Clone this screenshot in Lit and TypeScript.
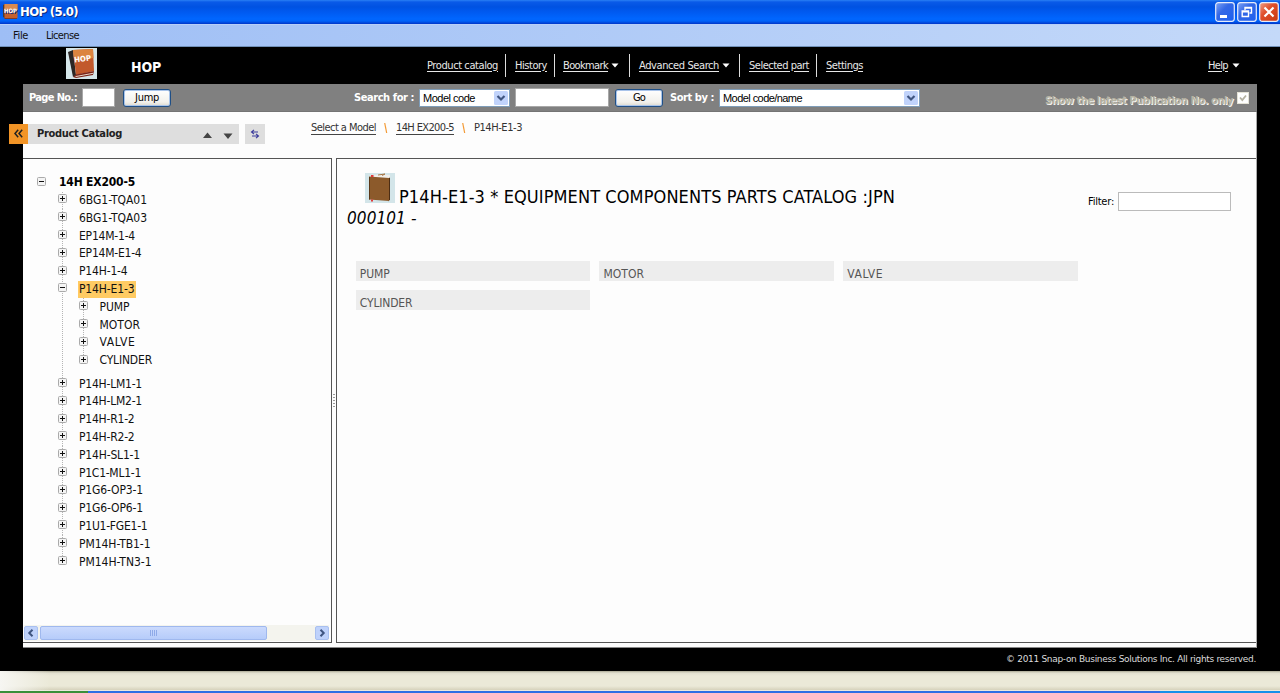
import { LitElement, html, css, svg } from "lit";
import { customElement, property } from "lit/decorators.js";

/** A single line of text whose tracking is adjusted to fill a given width. */
@customElement("fit-text")
class FitText extends LitElement {
  @property({ type: Number }) w = 0;

  static styles = css`
    :host { display: inline-block; white-space: pre; flex: none; }
    .run { display: inline-block; text-decoration: inherit; }
  `;

  firstUpdated() {
    const run = this.renderRoot.querySelector(".run") as HTMLElement;
    const n = (this.textContent || "").length;
    const natural = run.getBoundingClientRect().width;
    if (this.w && n) {
      this.style.letterSpacing = `${(this.w - natural) / n}px`;
      this.style.width = `${this.w}px`;
    }
  }

  render() {
    return html`<span class="run"><slot></slot></span>`;
  }
}

type Node = { label: string; w: number; open?: boolean; selected?: boolean; children?: Node[] };

const NODES: Node[] = [
  { label: "6BG1-TQA01", w: 68 },
  { label: "6BG1-TQA03", w: 68 },
  { label: "EP14M-1-4", w: 56 },
  { label: "EP14M-E1-4", w: 62.5 },
  { label: "P14H-1-4", w: 48.5 },
  {
    label: "P14H-E1-3", w: 55.5, open: true, selected: true,
    children: [
      { label: "PUMP", w: 30 },
      { label: "MOTOR", w: 40.5 },
      { label: "VALVE", w: 36 },
      { label: "CYLINDER", w: 52.5 },
    ],
  },
  { label: "P14H-LM1-1", w: 63 },
  { label: "P14H-LM2-1", w: 63 },
  { label: "P14H-R1-2", w: 55.5 },
  { label: "P14H-R2-2", w: 55.5 },
  { label: "P14H-SL1-1", w: 61 },
  { label: "P1C1-ML1-1", w: 62 },
  { label: "P1G6-OP3-1", w: 64 },
  { label: "P1G6-OP6-1", w: 64 },
  { label: "P1U1-FGE1-1", w: 68.5 },
  { label: "PM14H-TB1-1", w: 71.5 },
  { label: "PM14H-TN3-1", w: 72.5 },
];

const PARTS = [
  { label: "PUMP", w: 30 },
  { label: "MOTOR", w: 40.5 },
  { label: "VALVE", w: 36 },
  { label: "CYLINDER", w: 52.5 },
];

@customElement("app-root")
class AppRoot extends LitElement {
  static styles = css`
    :host {
      display: flex; flex-direction: column; width: 1280px; height: 693px; overflow: hidden;
      background: #000; color: #1a1a1a;
      font: 11px/14px "DejaVu Sans Condensed", "DejaVu Sans", sans-serif;
      font-stretch: condensed;
    }
    * { box-sizing: border-box; }
    svg { display: block; flex: none; }
    ul { list-style: none; margin: 0; padding: 0; }

    .titlebar {
      display: flex; align-items: center; height: 24px; padding: 0 1px 1px 3px; flex: none;
      background: linear-gradient(#2a80f5 0, #0a5ae8 2px, #0052e2 7px, #0058ee 11px, #0066ff 19px, #0062f8 21px, #0035c8 24px);
      color: #fff; font-size: 13px; font-weight: bold; text-shadow: 1px 1px 0 #0a2a7c;
    }
    .titlebar .name { margin: 1px auto 0 2px; }
    .win { display: flex; gap: 2px; }
    .menubar {
      display: flex; align-items: center; height: 23px; padding-left: 13px; gap: 18px; flex: none;
      background: linear-gradient(90deg, #9ebef5, #c4d9f9); border-top: 1px solid #b8cff8;
      border-bottom: 1px solid #7090b8; color: #111;
    }

    .header { display: flex; align-items: center; height: 37px; flex: none; color: #e8e8e8; }
    .header .logo { margin-left: 66px; margin-top: -4px; }
    .header .brand { margin: 3px 0 0 34px; color: #fff; font-size: 14px; font-weight: bold; }
    .nav { display: flex; align-items: center; margin-left: 266px; }
    .nav .item { display: flex; align-items: center; gap: 3px; }
    .link { text-decoration: underline; text-underline-offset: 2px; }
    .sep { width: 1px; height: 23px; margin: 0 9px 0 7px; background: #ddd; }
    .sep.tight { margin-right: 8px; }
    .sep.wide { margin-left: 10px; }
    .sep.even { margin-left: 9px; }
    .help { display: flex; align-items: center; gap: 4px; margin-left: 345px; }

    .toolbar {
      display: flex; align-items: center; height: 28px; margin: 0 23px 0 23px; padding-left: 6px; flex: none;
      background: #808080; border-bottom: 1px solid #747474;
      color: #fff; font-weight: bold;
    }
    .toolbar > fit-text { margin-top: 1px; }
    .field { height: 19px; background: #fff; border: 1px solid #a8a8a8; }
    .field.page { width: 33px; margin: 0 8px 0 5px; }
    .field.query { width: 94px; margin: 0 6px 0 5px; }
    .btn {
      display: flex; align-items: center; justify-content: center; width: 48px; height: 18px; padding-top: 1px;
      border: 1px solid #1f4f86; border-radius: 3px; font-weight: normal; color: #000;
      background: linear-gradient(#fff, #f2f1ec 75%, #dcd9ce); box-shadow: inset 0 0 0 1px #a9c4ea;
      flex: none;
    }
    .select {
      display: flex; align-items: center; justify-content: space-between; height: 18px; padding: 1px 1px 1px 3px;
      background: #fff; border: 1px solid #7f9db9; color: #000; font: 11px "Liberation Sans", sans-serif; flex: none;
    }
    .select.kind { width: 91px; }
    .select.order { width: 201px; }
    .toolbar > .search-label { margin: 1px 5px 0 183px; }
    .toolbar > .sort-label { margin: 1px 5px 0 7px; }
    .toolbar > .latest { margin: 6px 4px 0 125px; color: #b5b2a2; text-shadow: 1px 1px 0 #f4f4f0; }

    .body {
      display: flex; flex-direction: column; position: relative; height: 536px; margin: 0 23.5px 0 23px; flex: none;
      background: #fdfdfd; border-right: 1px solid #aaa; border-bottom: 1px solid #888;
    }
    .strip { display: flex; height: 46px; align-items: flex-start; padding: 12px 0 0 5px; flex: none; }
    .collapse {
      position: absolute; left: -14px; top: 12px; width: 19px; height: 20px; padding: 5px 0 0 5px; background: #f29426;
    }
    .heading {
      display: flex; align-items: center; width: 211px; height: 20px; padding: 0 6px 0 9px;
      background: #dedede; font-weight: bold; color: #222;
    }
    .heading svg { margin: 2px 0 0 81px; }
    .swap { width: 20px; height: 20px; margin-left: 6px; padding: 5px; background: #dedede; }
    .crumbs { display: flex; align-items: center; height: 16px; margin: -4px 0 0 46px; color: #333; }
    .crumbs .link { text-decoration: none; border-bottom: 1px solid #444; line-height: 13px; }
    .crumbs svg { margin: 0 8px 0 8px; }

    .panes { display: flex; height: 485px; }
    .left {
      display: flex; flex-direction: column; justify-content: space-between; width: 309px;
      border: solid #555; border-width: 1px 1px 1px 0;
    }
    .split { display: flex; align-items: center; width: 4px; padding-left: 1px; }
    .right { flex: 1; border: solid #555; border-width: 1px 0 1px 1px; }

    .tree { padding: 14.8px 0 0 14px; font-size: 12px; color: #111; }
    .row { display: flex; height: 17.8px; align-items: center; }
    .row svg { margin: -3px 11px 0 0; }
    .row .label { line-height: 17px; padding: 0 1px; }
    .row .label.selected { background: #ffcb63; }
    .root .label { font-weight: bold; color: #000; }
    .level { margin-left: 21px; }
    .root svg { margin-right: 12px; }
    .level > li {
      background: repeating-linear-gradient(#b5b5b5 0 1px, transparent 1px 2px) 4px 0 / 1px 100% no-repeat;
    }
    .level > li:last-child { background-size: 1px 8px; }
    .level .level { margin-left: 20.5px; }
    .level li.open { padding-bottom: 5.6px; }

    .hscroll { display: flex; align-items: center; height: 16px; margin: 0 2px 1px 1px; background: #f4f4ee; }
    .arrow {
      display: flex; align-items: center; justify-content: center; width: 14px; height: 14px;
      background: #bfd2fb; border: 1px solid #a9c0f0; border-radius: 2px;
    }
    .thumb {
      display: flex; align-items: center; justify-content: center; width: 227px; height: 14px; margin: 0 auto 0 2px;
      background: linear-gradient(#cbdafd, #b6ccfa); border: 1px solid #9fb8ee; border-radius: 2px;
    }

    .caption { display: flex; height: 102px; padding: 14px 25px 0 10px; color: #000; justify-content: space-between; }
    .caption .line { display: flex; align-items: flex-end; height: 33px; font-size: 18px; padding-left: 18px; }
    .caption .line svg { margin-bottom: 3px; }
    .caption .line fit-text { line-height: 22px; margin: 0 0 -2px 4px; }
    .caption .range { font-size: 17px; font-style: italic; line-height: 20px; margin-top: 2px; }
    .filter { display: flex; align-items: center; gap: 4px; height: 19px; margin-top: 19px; }
    .filter .field { width: 112.5px; border-color: #bbb; }
    .parts { display: grid; grid-template-columns: repeat(3, 234.4px); column-gap: 9.3px; row-gap: 9px; padding: 0 0 0 18.8px; }
    .part { height: 20px; padding: 6px 0 0 4px; background: #ededed; color: #555; font-size: 12px; line-height: 14px; }
    .part fit-text { display: block; }

    .footer {
      height: 23px; padding: 4px 24px 0 0; text-align: right; color: #dcdcdc; font-size: 9px; font-family: "DejaVu Sans", sans-serif;
      font-stretch: normal; flex: none;
    }
    .status {
      height: 20px; flex: none;
      background: linear-gradient(90deg, #f6f6f2, transparent 50px), linear-gradient(#a9a793 0, #e2e0d0 2px, #ebe9d8 5px, #ebe9d8 15px, #d6d2bc 19px, #fff);
    }
    .taskbar { height: 2px; flex: none; background: linear-gradient(90deg, #3a8f3a 88px, #2c6fe4 88px 1160px, #1590ea 1160px); }
  `;

  private hopBook(size: number) {
    return html`<svg width=${size} height=${size} viewBox="0 0 31 31">
      <rect width="31" height="31" fill="#d5e6ea" />
      <path d="M2 4 L7 2 L10 27 L7 29z" fill="#2c2624" />
      <path d="M7 2 L27 1 L28 23 L10 27z" fill="#c2592c" />
      <path d="M7 2 L27 1 L27.500 10 L8 13z" fill="#dc8440" />
      <path d="M7 29 L10 26.500 L28 23 L27 27 L10 30z" fill="#7c2418" />
      <path d="M9.500 28.600 L27 25.300" stroke="#e8d9cc" />
      <text x="8.500" y="14.500" font-family="DejaVu Sans" font-size="7.500" font-weight="bold" fill="#fff"
        textLength="17" lengthAdjust="spacingAndGlyphs" transform="rotate(-7 8 15)">HOP</text>
    </svg>`;
  }

  /** Flat variant of the book mark, legible at title-bar size. */
  private hopMark() {
    return html`<svg width="15" height="15" viewBox="0 0 15 15">
      <path d="M0 1L2 0v14L0 13z" fill="#4a3a34" />
      <rect x="1.500" width="13" height="14" fill="#c4602e" />
      <rect x="1.500" width="13" height="6" fill="#d98a50" />
      <path d="M1.500 14.500h12.500" stroke="#7c3a28" />
      <text x="1" y="9" font-family="DejaVu Sans" font-size="6" font-weight="bold" fill="#fff"
        textLength="13" lengthAdjust="spacingAndGlyphs">HOP</text>
    </svg>`;
  }

  private winButton(kind: "min" | "restore" | "close") {
    const close = kind === "close";
    const glyph = {
      min: svg`<path d="M5 14.500h7" stroke="#fff" stroke-width="3" />`,
      restore: svg`<path d="M8 8V5.500h6.500v5.500h-2M8 6h6.500" fill="none" stroke="#fff" stroke-width="1.400" />
        <path d="M5.200 9h6.300v5.500H5.200zM5 9.700h6.500" fill="none" stroke="#fff" stroke-width="1.400" />`,
      close: svg`<path d="M5.500 5.500l9 9M14.500 5.500l-9 9" stroke="#fff" stroke-width="2.200" />`,
    }[kind];
    return html`<svg width="20" height="20" viewBox="0 0 20 20">
      <defs><linearGradient id="face-${kind}" x2="1" y2="1">
        <stop stop-color=${close ? "#f0a088" : "#7fa4f5"} />
        <stop offset=".4" stop-color=${close ? "#e0502c" : "#3468e6"} />
        <stop offset="1" stop-color=${close ? "#c8380f" : "#1c60f0"} />
      </linearGradient></defs>
      <rect x=".7" y=".7" width="18.600" height="18.600" rx="2.500" fill="url(#face-${kind})" stroke="#e6ecfb" stroke-width="1.200" />
      ${glyph}
    </svg>`;
  }

  private caret() {
    return html`<svg width="8" height="5" viewBox="0 0 8 5"><path d="M.5 .5h7L4 4.500z" fill="#fff" /></svg>`;
  }

  private chevron() {
    return html`<svg width="14" height="14" viewBox="0 0 14 14">
      <rect width="14" height="14" rx="1.500" fill="#c1d3fb" />
      <path d="M3.500 5L7 8.500 10.500 5" fill="none" stroke="#3f5580" stroke-width="2.200" />
    </svg>`;
  }

  private toggle(open?: boolean) {
    return html`<svg width="9" height="9" viewBox="0 0 9 9">
      <rect x=".5" y=".5" width="8" height="8" rx="1" fill="#f4f4f4" stroke="#aaa" />
      <path d="M2 4.500h5" stroke="#111" />
      ${open ? "" : svg`<path d="M4.500 2v5" stroke="#111" />`}
    </svg>`;
  }

  private node(n: Node): unknown {
    return html`<li class=${n.open ? "open" : ""}>
      <div class="row">
        ${this.toggle(n.open)}
        <span class="label ${n.selected ? "selected" : ""}"><fit-text w=${n.w}>${n.label}</fit-text></span>
      </div>
      ${n.children ? html`<ul class="level">${n.children.map((c) => this.node(c))}</ul>` : ""}
    </li>`;
  }

  render() {
    const slash = html`<svg width="4" height="10" viewBox="0 0 4 10"><path d="M.7 0l2 10" stroke="#f39a35" stroke-width="1.200" /></svg>`;
    return html`
      <div class="titlebar">
        ${this.hopMark()}
        <fit-text class="name" w="58">HOP (5.0)</fit-text>
        <div class="win">${this.winButton("min")}${this.winButton("restore")}${this.winButton("close")}</div>
      </div>
      <div class="menubar"><fit-text w="15">File</fit-text><fit-text w="33">License</fit-text></div>

      <div class="header">
        <div class="logo">${this.hopBook(31)}</div>
        <fit-text class="brand" w="30">HOP</fit-text>
        <nav class="nav">
          <fit-text class="link" w="71">Product catalog</fit-text>
          <span class="sep"></span>
          <fit-text class="link" w="32">History</fit-text>
          <span class="sep tight"></span>
          <span class="item"><fit-text class="link" w="45">Bookmark</fit-text>${this.caret()}</span>
          <span class="sep wide"></span>
          <span class="item"><fit-text class="link" w="80">Advanced Search</fit-text>${this.caret()}</span>
          <span class="sep even"></span>
          <fit-text class="link" w="60">Selected part</fit-text>
          <span class="sep"></span>
          <fit-text class="link" w="37">Settings</fit-text>
        </nav>
        <div class="help"><fit-text class="link" w="20">Help</fit-text>${this.caret()}</div>
      </div>

      <div class="toolbar">
        <fit-text w="48">Page No.:</fit-text>
        <span class="field page"></span>
        <span class="btn"><fit-text w="24">Jump</fit-text></span>
        <fit-text class="search-label" w="60">Search for :</fit-text>
        <span class="select kind"><fit-text w="52">Model code</fit-text>${this.chevron()}</span>
        <span class="field query"></span>
        <span class="btn"><fit-text w="12">Go</fit-text></span>
        <fit-text class="sort-label" w="44">Sort by :</fit-text>
        <span class="select order"><fit-text w="79">Model code/name</fit-text>${this.chevron()}</span>
        <fit-text class="latest" w="188">Show the latest Publication No. only</fit-text>
        <svg width="12" height="12" viewBox="0 0 12 12">
          <rect x=".5" y=".5" width="11" height="11" fill="#fff" stroke="#e4e2d6" />
          <path d="M3 5.500l2.300 2.600L9 3.500" fill="none" stroke="#b5b2a2" stroke-width="1.800" />
        </svg>
      </div>

      <div class="body">
        <div class="strip">
          <div class="collapse">
            <svg width="9" height="9" viewBox="0 0 9 9"><path d="M4.200 .8L1 4.500l3.200 3.700M8.200 .8L5 4.500l3.200 3.700" fill="none" stroke="#222" stroke-width="1.500" /></svg>
          </div>
          <div class="heading">
            <fit-text w="85">Product Catalog</fit-text>
            <svg width="30" height="7" viewBox="0 0 30 7"><path d="M0 6h9L4.500 .5zM20.500 1.500h9L25 7z" fill="#444" /></svg>
          </div>
          <div class="swap">
            <svg width="10" height="10" viewBox="0 0 10 10"><path d="M8 3H2M4 .8L1.500 3 4 5.200M2 7h6M6 4.800L8.500 7 6 9.200" fill="none" stroke="#3a3a9c" stroke-width="1.100" /></svg>
          </div>
          <div class="crumbs">
            <fit-text class="link" w="65">Select a Model</fit-text>${slash}
            <fit-text class="link" w="58">14H EX200-5</fit-text>${slash}
            <fit-text w="48">P14H-E1-3</fit-text>
          </div>
        </div>
        <div class="panes">
          <div class="left">
            <div class="tree">
              <div class="row root">${this.toggle(true)}<span class="label"><fit-text w="76">14H EX200-5</fit-text></span></div>
              <ul class="level">${NODES.map((n) => this.node(n))}</ul>
            </div>
            <div class="hscroll">
              <span class="arrow"><svg width="8" height="8" viewBox="0 0 8 8"><path d="M5.500 .8L2.300 4l3.200 3.200" fill="none" stroke="#3f5580" stroke-width="2" /></svg></span>
              <span class="thumb"><svg width="8" height="6" viewBox="0 0 8 6"><path d="M.5 0v6M2.500 0v6M4.500 0v6M6.500 0v6" stroke="#8eaae8" /></svg></span>
              <span class="arrow"><svg width="8" height="8" viewBox="0 0 8 8"><path d="M2.500 .8L5.700 4 2.500 7.200" fill="none" stroke="#3f5580" stroke-width="2" /></svg></span>
            </div>
          </div>
          <div class="split"><svg width="2" height="14" viewBox="0 0 2 14"><path d="M1 0v14" stroke="#999" stroke-width="2" stroke-dasharray="1 2" /></svg></div>
          <div class="right">
            <div class="caption">
              <div>
                <div class="line">
                  <svg width="30" height="30" viewBox="0 0 30 30">
                    <rect width="30" height="30" fill="#d3e5e9" />
                    <path d="M5 3l9-1.500 11 .5v22l-2 3z" fill="#f1eee9" />
                    <path d="M13 2l7-1-3 1.500" fill="none" stroke="#a87848" />
                    <path d="M24 5l1-.5v22l-1.500 2z" fill="#4c2d14" />
                    <path d="M4 3.500l20 1.500v23L4 26.500z" fill="#8c5a2b" />
                    <path d="M4.500 4v22.500" stroke="#5c3716" />
                    <path d="M6 3h2.500M6 27.500h2" stroke="#e23a3a" stroke-width="2" />
                  </svg>
                  <fit-text w="496">P14H-E1-3 * EQUIPMENT COMPONENTS PARTS CATALOG :JPN</fit-text>
                </div>
                <fit-text class="range" w="69.5">000101 -</fit-text>
              </div>
              <div class="filter"><fit-text w="26">Filter:</fit-text><span class="field"></span></div>
            </div>
            <div class="parts">${PARTS.map((p) => html`<div class="part"><fit-text w=${p.w}>${p.label}</fit-text></div>`)}</div>
          </div>
        </div>
      </div>

      <div class="footer"><fit-text w="250">© 2011 Snap-on Business Solutions Inc. All rights reserved.</fit-text></div>
      <div class="status"></div>
      <div class="taskbar"></div>
    `;
  }
}
